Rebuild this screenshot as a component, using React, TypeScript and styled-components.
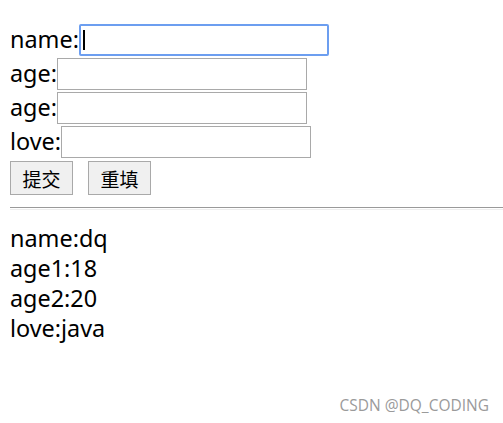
import React from 'react';
import styled, { createGlobalStyle } from "styled-components";

const GlobalStyle = createGlobalStyle`
  body {
    margin: 0;
    background: #ffffff;
    font-family: "Noto Sans", "Noto Sans CJK SC", sans-serif;
  }
`

export default function App() {
    return (
        <Page>
            <GlobalStyle/>
            <Form>
                <Row>
                    <Label>name:</Label>
                    <Field $focused>
                        <Caret/>
                    </Field>
                </Row>
                <Row>
                    <Label>age:</Label>
                    <Field/>
                </Row>
                <Row>
                    <Label>age:</Label>
                    <Field/>
                </Row>
                <Row>
                    <Label>love:</Label>
                    <Field/>
                </Row>
                <Buttons>
                    <Button>提交</Button>
                    <Button>重填</Button>
                </Buttons>
            </Form>
            <Rule/>
            <Output>
                <Line>name:dq</Line>
                <Line>age1:18</Line>
                <Line>age2:20</Line>
                <Line>love:java</Line>
            </Output>
            <Watermark>CSDN @DQ_CODING</Watermark>
        </Page>
    );
};

const Page = styled.div`
  position: relative;
  width: 503px;
  height: 423px;
  padding: 24px 0 0 10px;
  box-sizing: border-box;
  overflow: hidden;
`
const Form = styled.div`
  display: flex;
  flex-direction: column;
  gap: 2px;
`
const Row = styled.div`
  display: flex;
  align-items: center;
  height: 32px;
`
const Label = styled.span`
  font-size: 23.4px;
  color: #000;
  line-height: 32px;
  margin-top: -2px;
`
const Field = styled.div<{ $focused?: boolean }>`
  width: 250px;
  height: 32px;
  box-sizing: border-box;
  border: ${p => p.$focused ? "2px solid #6c9ef0" : "1px solid #a9a9a9"};
  border-radius: ${p => p.$focused ? "2px" : "0"};
  display: flex;
  align-items: center;
  padding-left: 2px;
`
const Caret = styled.span`
  width: 2px;
  height: 20px;
  background: #000;
`
const Buttons = styled.div`
  display: flex;
  gap: 15px;
  margin-top: 1px;
`
const Button = styled.button`
  width: 63px;
  height: 34px;
  box-sizing: border-box;
  border: 1px solid #a9a9a9;
  background: #f0f0f0;
  border-radius: 0;
  font-family: "Noto Sans CJK SC", sans-serif;
  font-size: 19px;
  color: #000;
  padding: 0;
`
const Rule = styled.div`
  margin-top: 12px;
  height: 1px;
  border-top: 1px solid #9a9a9a;
  border-bottom: 1px solid #eeeeee;
`
const Output = styled.div`
  margin-top: 13px;
  display: flex;
  flex-direction: column;
`
const Line = styled.div`
  font-size: 23.4px;
  line-height: 30px;
  color: #000;
`
const Watermark = styled.div`
  position: absolute;
  right: 14px;
  top: 394px;
  font-family: "Open Sans", sans-serif;
  font-size: 15.5px;
  color: #9a9a9a;
`
